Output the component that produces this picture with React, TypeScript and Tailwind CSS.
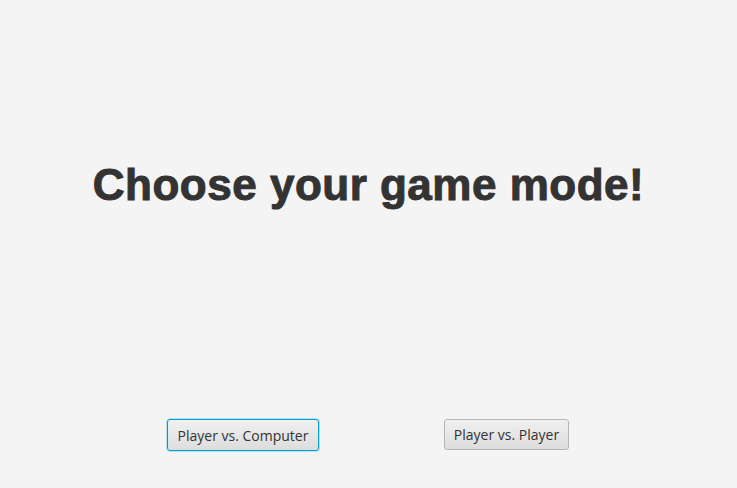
export default function App() {
  return (
    <div className="w-[737px] h-[488px] bg-[#f4f4f4] flex flex-col overflow-hidden">
      {/* title */}
      <div className="h-[370px] flex justify-center pt-[159px]">
        <h1
          className="text-[44px] leading-[52px] font-bold text-[#333333] tracking-[0.5px] [-webkit-text-stroke:1px_#333333]"
          style={{ fontFamily: '"Liberation Sans", Arial, sans-serif' }}
        >
          Choose your game mode!
        </h1>
      </div>
      {/* buttons */}
      <div
        className="flex items-start pl-[167px] pt-[49px] gap-[125px] text-[14px] text-[#333333]"
        style={{ fontFamily: '"Open Sans", "Noto Sans", sans-serif' }}
      >
        <button className="h-[32px] w-[152px] rounded-[3px] border border-[#039ed3] bg-gradient-to-b from-[#f0f0f0] to-[#dddddd] shadow-[0_0_0_1px_#b4dff0]">
          Player vs. Computer
        </button>
        <button className="h-[31px] w-[125px] rounded-[3px] border border-[#b5b5b5] bg-gradient-to-b from-[#f0f0f0] to-[#dddddd]">
          Player vs. Player
        </button>
      </div>
    </div>
  );
}
